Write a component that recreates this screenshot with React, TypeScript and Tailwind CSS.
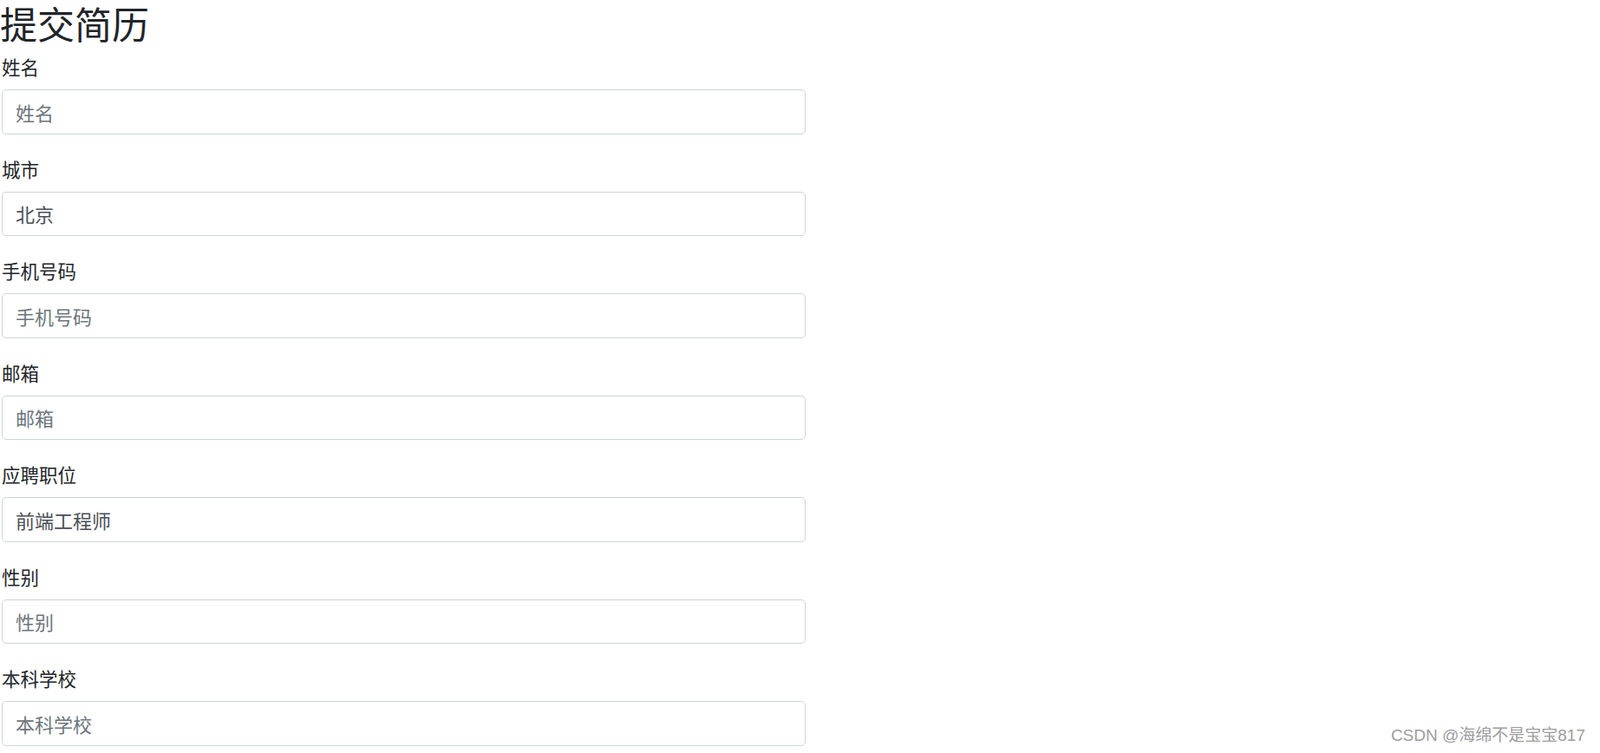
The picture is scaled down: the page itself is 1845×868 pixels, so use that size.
import React from "react";

const fields: { label: string; value?: string; placeholder: string }[] = [
  { label: "姓名", placeholder: "姓名" },
  { label: "城市", value: "北京", placeholder: "城市" },
  { label: "手机号码", placeholder: "手机号码" },
  { label: "邮箱", placeholder: "邮箱" },
  { label: "应聘职位", value: "前端工程师", placeholder: "应聘职位" },
  { label: "性别", placeholder: "性别" },
  { label: "本科学校", placeholder: "本科学校" },
];

const FONT = '"Microsoft YaHei", "Noto Sans CJK SC", "Noto Sans", sans-serif';

export default function App() {
  return (
    <div className="relative min-h-[868px] w-full bg-white text-[#212529]" style={{ fontFamily: FONT }}>
      <h2 className="m-0 h-[52px] text-[43px] font-normal leading-[52px] mb-[8px]">提交简历</h2>
      <form className="w-[927px] ml-[2px]">
        {fields.map((f) => (
          <div key={f.label} className="mb-[23px]">
            <label className="block text-[21.5px] leading-[33px] mb-[10px]">{f.label}</label>
            <input
              type="text"
              defaultValue={f.value}
              placeholder={f.placeholder}
              className="block w-full h-[51.5px] rounded-[5px] border border-[#ced4da] bg-white px-[15px] text-[22px] text-[#495057] placeholder:text-[#6c757d] outline-none"
              style={{ fontFamily: FONT }}
            />
          </div>
        ))}
      </form>
      <div
        className="absolute right-[17px] top-[836px] text-[19px] leading-[24px] text-[#9d9d9d]"
        style={{ fontFamily: '"Liberation Sans", "Noto Sans CJK SC", sans-serif' }}
      >
        CSDN @海绵不是宝宝817
      </div>
    </div>
  );
}
